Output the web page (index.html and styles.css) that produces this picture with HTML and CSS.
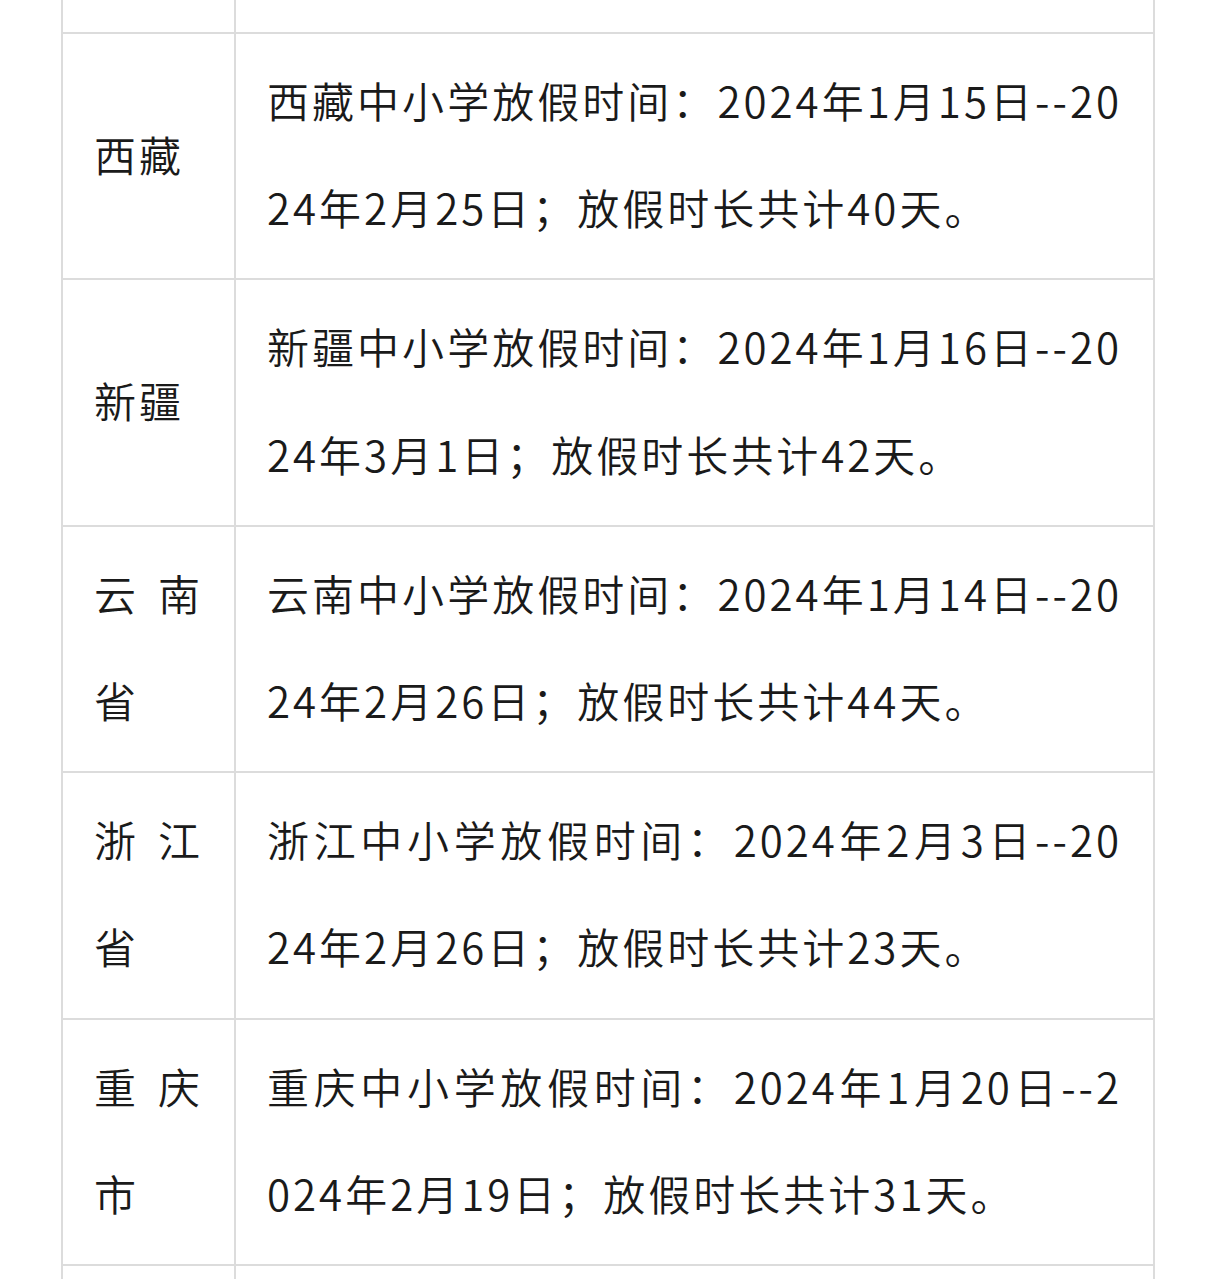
FILE: index.html
```html
<!DOCTYPE html>
<html lang="zh-CN">
<head>
<meta charset="utf-8">
<title>中小学放假时间</title>
<link rel="stylesheet" href="styles.css">
</head>
<body>
<div class="page">
  <table class="holiday">
    <colgroup>
      <col class="col-region">
      <col class="col-desc">
    </colgroup>
    <tbody>
      <tr class="row-cut-top"><td></td><td></td></tr>
      <tr>
        <td class="region">西藏</td>
        <td class="desc"><span class="ln">西藏中小学放假时间：2024年1月15日--20</span><span class="ln last">24年2月25日；放假时长共计40天。</span></td>
      </tr>
      <tr>
        <td class="region">新疆</td>
        <td class="desc"><span class="ln">新疆中小学放假时间：2024年1月16日--20</span><span class="ln last">24年3月1日；放假时长共计42天。</span></td>
      </tr>
      <tr>
        <td class="region">云 南 省</td>
        <td class="desc"><span class="ln">云南中小学放假时间：2024年1月14日--20</span><span class="ln last">24年2月26日；放假时长共计44天。</span></td>
      </tr>
      <tr>
        <td class="region">浙 江 省</td>
        <td class="desc"><span class="ln">浙江中小学放假时间：2024年2月3日--20</span><span class="ln last">24年2月26日；放假时长共计23天。</span></td>
      </tr>
      <tr>
        <td class="region">重 庆 市</td>
        <td class="desc"><span class="ln">重庆中小学放假时间：2024年1月20日--2</span><span class="ln last">024年2月19日；放假时长共计31天。</span></td>
      </tr>
      <tr class="row-cut-bottom"><td></td><td></td></tr>
    </tbody>
  </table>
</div>
</body>
</html>
```
FILE: styles.css
```css
html, body {
  margin: 0;
  padding: 0;
  background: #ffffff;
}

.page {
  padding: 0 62px 0 61px;
}

.holiday {
  width: 100%;
  border-collapse: collapse;
  table-layout: fixed;
  font-family: "Noto Sans CJK SC", "Noto Sans", sans-serif;
  font-weight: 350;
  font-size: 42px;
  letter-spacing: 3px;
  line-height: 107.2px;
  color: #1a1a1a;
}

.col-region {
  width: 173px;
}

.holiday td {
  border: 2px solid #dcdcdc;
  padding: 12px 31px 18px;
  vertical-align: middle;
}

.region {
  text-align: justify;
  word-break: break-all;
}

.desc .ln {
  display: block;
  white-space: nowrap;
  text-align: justify;
  text-align-last: justify;
}

.desc .ln.last {
  text-align: left;
  text-align-last: left;
}

.row-cut-top td {
  border-top: 0;
  padding: 0;
  height: 32px;
}

.row-cut-bottom td {
  border-bottom: 0;
  padding: 0;
  height: 13px;
}
```
